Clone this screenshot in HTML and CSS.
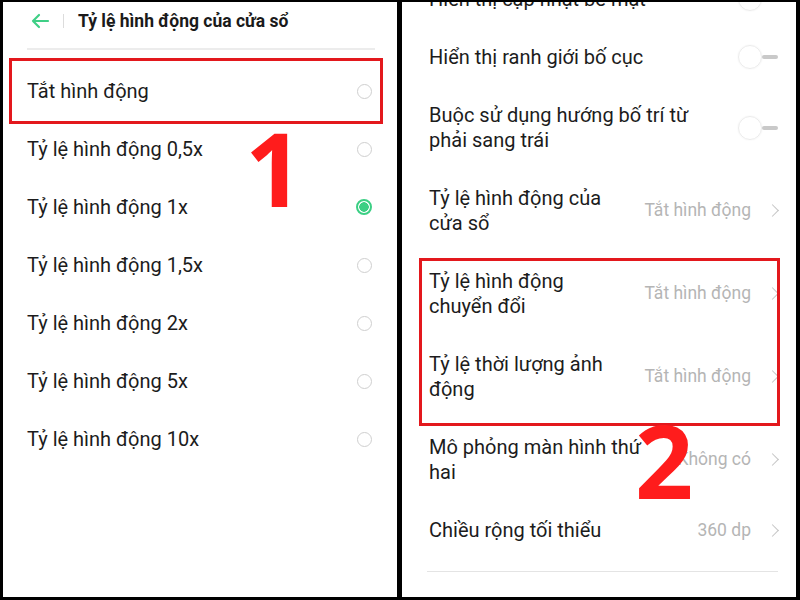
FILE: index.html
```html
<!DOCTYPE html>
<html lang="vi">

<head>
    <meta charset="UTF-8">
    <meta name="viewport" content="width=device-width, initial-scale=1.0">
    <title>Tỷ lệ hình động</title>
    <link rel="stylesheet" href="styles.css">
</head>

<body>
    <div class="frame">
        <!-- màn hình 1: chọn tỷ lệ -->
        <div class="screen left">
            <div class="topbar">
                <svg class="back" width="20" height="16" viewBox="0 0 20 16">
                    <path d="M18 8H3M9 2L3 8l6 6" fill="none" stroke="#3fcf86" stroke-width="2.2" stroke-linecap="round" stroke-linejoin="round"/>
                </svg>
                <span class="sep"></span>
                <h1 class="title">Tỷ lệ hình động của cửa sổ</h1>
            </div>
            <div class="rule"></div>
            <ul class="options">
                <li class="option"><span>Tắt hình động</span><span class="radio"></span></li>
                <li class="option"><span>Tỷ lệ hình động 0,5x</span><span class="radio"></span></li>
                <li class="option"><span>Tỷ lệ hình động 1x</span><span class="radio on"></span></li>
                <li class="option"><span>Tỷ lệ hình động 1,5x</span><span class="radio"></span></li>
                <li class="option"><span>Tỷ lệ hình động 2x</span><span class="radio"></span></li>
                <li class="option"><span>Tỷ lệ hình động 5x</span><span class="radio"></span></li>
                <li class="option"><span>Tỷ lệ hình động 10x</span><span class="radio"></span></li>
            </ul>
            <div class="mark mark-1"></div>
            <div class="num num-1">1</div>
        </div>

        <!-- màn hình 2: tùy chọn nhà phát triển -->
        <div class="screen right">
            <ul class="settings">
                <li class="setting"><span class="label">Hiển thị cập nhật bề mặt</span><span class="switch"></span></li>
                <li class="setting"><span class="label">Hiển thị ranh giới bố cục</span><span class="switch"></span></li>
                <li class="setting"><span class="label">Buộc sử dụng hướng bố trí từ<br>phải sang trái</span><span class="switch"></span></li>
                <li class="setting"><span class="label">Tỷ lệ hình động của<br>cửa sổ</span><span class="value">Tắt hình động<i class="chev"></i></span></li>
                <li class="setting"><span class="label">Tỷ lệ hình động<br>chuyển đổi</span><span class="value">Tắt hình động<i class="chev"></i></span></li>
                <li class="setting"><span class="label">Tỷ lệ thời lượng ảnh<br>động</span><span class="value">Tắt hình động<i class="chev"></i></span></li>
                <li class="setting"><span class="label">Mô phỏng màn hình thứ<br>hai</span><span class="value">Không có<i class="chev"></i></span></li>
                <li class="setting"><span class="label">Chiều rộng tối thiểu</span><span class="value">360 dp<i class="chev"></i></span></li>
            </ul>
            <div class="rule bottom"></div>
            <div class="mark mark-2"></div>
            <div class="num num-2">2</div>
        </div>
    </div>
</body>

</html>
```

FILE: styles.css
```css
body {
    margin: 0;
    background-color: #000;
    font-family: Roboto, "Noto Sans", Arial, sans-serif;
    color: #1c1c1c;
}

.frame {
    display: flex;
    gap: 5px;
    width: 800px;
    height: 600px;
    box-sizing: border-box;
    padding: 2px 4px 3px 3px;
}

.screen {
    position: relative;
    background-color: #fff;
    overflow: hidden;
}

.left {
    width: 394px;
}

.right {
    flex: 1;
}

/* thanh tiêu đề */
.topbar {
    display: flex;
    align-items: center;
    height: 38px;
    padding: 0 0 0 27px;
}

.back {
    display: block;
}

.sep {
    width: 1px;
    height: 14px;
    background-color: #dcdcdc;
    margin: 0 14px 0 13px;
}

.title {
    margin: 0;
    font-size: 17.5px;
    font-weight: bold;
    color: #1a1a1a;
}

.rule {
    height: 2px;
    background-color: #ececec;
    margin: 8px 22px 0 24px;
}

ul {
    list-style: none;
    margin: 0;
    padding: 0;
}

/* danh sách lựa chọn */
.options {
    padding: 12px 25px 0 24px;
}

.option {
    display: flex;
    align-items: center;
    justify-content: space-between;
    height: 58px;
    font-size: 20px;
}

.radio {
    width: 15px;
    height: 15px;
    border: 1.5px solid #cfcfcf;
    border-radius: 50%;
    box-sizing: border-box;
}

.radio.on {
    width: 16px;
    height: 16px;
    border: 2px solid #3bcf84;
    background: radial-gradient(circle, #3bcf84 0 4.5px, #fff 5px);
}

/* danh sách cài đặt */
.settings {
    margin-top: -32px;
    padding: 0 17px 0 27px;
}

.setting {
    display: flex;
    align-items: center;
    justify-content: space-between;
    padding: 16.5px 0;
    line-height: 25px;
    font-size: 20px;
}

.label {
    white-space: nowrap;
}

.switch {
    position: relative;
    width: 40px;
    height: 24px;
    margin-right: 1px;
}

.switch::before {
    content: '';
    position: absolute;
    left: 0;
    top: 0;
    width: 24px;
    height: 24px;
    box-sizing: border-box;
    border: 1px solid #ececec;
    border-radius: 50%;
    box-shadow: 0 0 2px rgba(0, 0, 0, 0.06);
}

.switch::after {
    content: '';
    position: absolute;
    left: 24px;
    top: 10px;
    width: 16px;
    height: 4px;
    border-radius: 2px;
    background-color: #c9c9c9;
}

.value {
    display: flex;
    align-items: center;
    font-size: 17.5px;
    color: #b5b5b5;
    white-space: nowrap;
}

.chev {
    width: 8px;
    height: 8px;
    border-top: 1.5px solid #c4c4c4;
    border-right: 1.5px solid #c4c4c4;
    transform: rotate(45deg);
    margin: 0 2px 0 17px;
}

.rule.bottom {
    height: 1px;
    background-color: #e4e4e4;
    margin: 12px 18px 0 25px;
}

/* khung đánh dấu và số */
.mark {
    position: absolute;
    border: 3px solid #e3181d;
}

.mark-1 {
    left: 6px;
    top: 56px;
    width: 368px;
    height: 60px;
}

.mark-2 {
    left: 17px;
    top: 256px;
    width: 355px;
    height: 162px;
}

.num {
    position: absolute;
    font-family: "Open Sans", "Liberation Sans", Arial, sans-serif;
    font-weight: bold;
    font-size: 102px;
    line-height: 1;
    color: #ff1c1c;
}

.num-1 {
    left: 242px;
    top: 115px;
}

.num-2 {
    left: 233px;
    top: 407px;
}
```
